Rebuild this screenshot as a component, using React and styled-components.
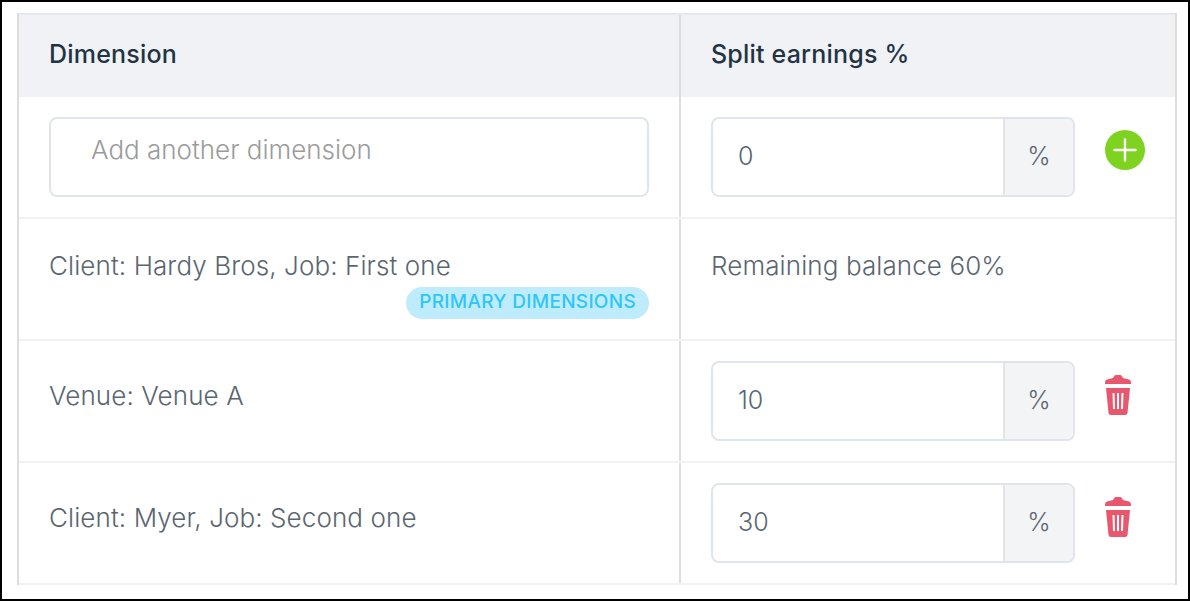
import React from "react";
import styled, { createGlobalStyle } from "styled-components";

const GlobalStyle = createGlobalStyle`
  html, body {
    margin: 0;
    background: #ffffff;
  }
  * {
    box-sizing: border-box;
  }
`;

const App = () => {
  return (
    <Page>
      <GlobalStyle />
      <Table>
        <HeaderRow>
          <HeaderCell>Dimension</HeaderCell>
          <HeaderCell>Split earnings %</HeaderCell>
        </HeaderRow>
        <Row>
          <LeftCell>
            <DimensionInput>Add another dimension</DimensionInput>
          </LeftCell>
          <RightCell>
            <PercentField value="0" />
            <AddIcon />
          </RightCell>
        </Row>
        <Row>
          <LeftCell>
            <Label>Client: Hardy Bros, Job: First one</Label>
            <Badge>PRIMARY DIMENSIONS</Badge>
          </LeftCell>
          <RightCell>
            <Label>Remaining balance 60%</Label>
          </RightCell>
        </Row>
        <Row>
          <LeftCell>
            <Label $low>Venue: Venue A</Label>
          </LeftCell>
          <RightCell>
            <PercentField value="10" />
            <TrashIcon />
          </RightCell>
        </Row>
        <Row>
          <LeftCell>
            <Label $low>Client: Myer, Job: Second one</Label>
          </LeftCell>
          <RightCell>
            <PercentField value="30" />
            <TrashIcon />
          </RightCell>
        </Row>
      </Table>
    </Page>
  );
};

const PercentField = ({ value }) => (
  <Field>
    <FieldValue>{value}</FieldValue>
    <FieldUnit>%</FieldUnit>
  </Field>
);

const AddIcon = () => (
  <IconSlot>
    <svg width="40" height="40" viewBox="0 0 40 40">
      <circle cx="20" cy="20" r="20" fill="#7ed321" />
      <path d="M20 9.5v21M9.5 20h21" stroke="#fff" strokeWidth="2.4" strokeLinecap="round" />
    </svg>
  </IconSlot>
);

const TrashIcon = () => (
  <IconSlot $trash>
    <svg width="26" height="40" viewBox="0 0 26 40">
      <path
        d="M8 3L9.500.6Q10 0 11 0H15Q16 0 16.500.6L18 3L24 4.500Q26 5 26 7.500V9H0V7.500Q0 5 2 4.500Z"
        fill="#e8576d"
      />
      <path
        d="M1 13H25L22.500 38Q22.300 40 20 40H6Q3.700 40 3.500 38Z"
        fill="#e8576d"
      />
      <path d="M8.500 18l.5 16M13 18v16M17.500 18l-.5 16" stroke="#fff" strokeWidth="2" />
    </svg>
  </IconSlot>
);

// Styles
const Page = styled.div`
  width: 1190px;
  height: 601px;
  border: 2px solid #000000;
  padding: 11px 11px 0 15px;
  overflow: hidden;
  background: #ffffff;
  font-family: "Inter", "Liberation Sans", sans-serif;
`;

const Table = styled.div`
  width: 1160px;
  border-left: 2px solid #dddddd;
  border-right: 2px solid #dddddd;
`;

const HeaderRow = styled.div`
  display: grid;
  grid-template-columns: 660px 1fr;
  height: 84px;
  background: #f1f2f6;
  border-top: 2px solid #e4e8f0;
`;

const HeaderCell = styled.div`
  display: flex;
  align-items: center;
  padding: 0 0 5px 30px;
  font-size: 25px;
  font-weight: 500;
  letter-spacing: 0.2px;
  color: #1f3444;

  & + & {
    border-left: 2px solid #dddddd;
  }
`;

const Row = styled.div`
  display: grid;
  grid-template-columns: 660px 1fr;
  height: 122px;
  border-bottom: 2px solid #f2f2f2;
`;

const LeftCell = styled.div`
  display: flex;
  flex-direction: column;
  align-items: flex-start;
  padding: 20px 30px 0;
`;

const RightCell = styled.div`
  display: flex;
  align-items: flex-start;
  padding: 20px 30px 0;
  border-left: 2px solid #dddddd;
`;

const DimensionInput = styled.div`
  width: 600px;
  height: 80px;
  border: 2px solid #dfe5ea;
  border-radius: 8px;
  padding: 14px 0 0 40px;
  font-size: 26px;
  font-weight: 300;
  line-height: 34px;
  color: #9b9b9b;
`;

const Label = styled.div`
  padding-top: ${(props) => (props.$low ? "18px" : "10px")};
  font-size: 26px;
  font-weight: 300;
  letter-spacing: 0.1px;
  line-height: 34px;
  color: #5b6670;
`;

const Badge = styled.div`
  align-self: flex-end;
  margin-top: 4px;
  height: 32px;
  padding: 0 13px;
  border-radius: 16px;
  background: #bfecfd;
  color: #2fc6f8;
  font-size: 19px;
  font-weight: 500;
  letter-spacing: 0.3px;
  line-height: 30px;
  white-space: nowrap;
`;

const Field = styled.div`
  display: flex;
  width: 364px;
  height: 80px;
  border: 2px solid #dfe5ea;
  border-radius: 8px;
  overflow: hidden;
  font-size: 25px;
  font-weight: 300;
  color: #5b6670;
`;

const FieldValue = styled.div`
  flex: 1;
  display: flex;
  align-items: center;
  padding: 0 0 3px 25px;
`;

const FieldUnit = styled.div`
  display: flex;
  align-items: center;
  justify-content: center;
  width: 70px;
  padding-bottom: 3px;
  background: #f3f4f6;
  border-left: 2px solid #dfe5ea;
`;

const IconSlot = styled.div`
  display: flex;
  width: 40px;
  margin: ${(props) => (props.$trash ? "14px" : "13px")} 0 0 30px;
`;

export default App;
